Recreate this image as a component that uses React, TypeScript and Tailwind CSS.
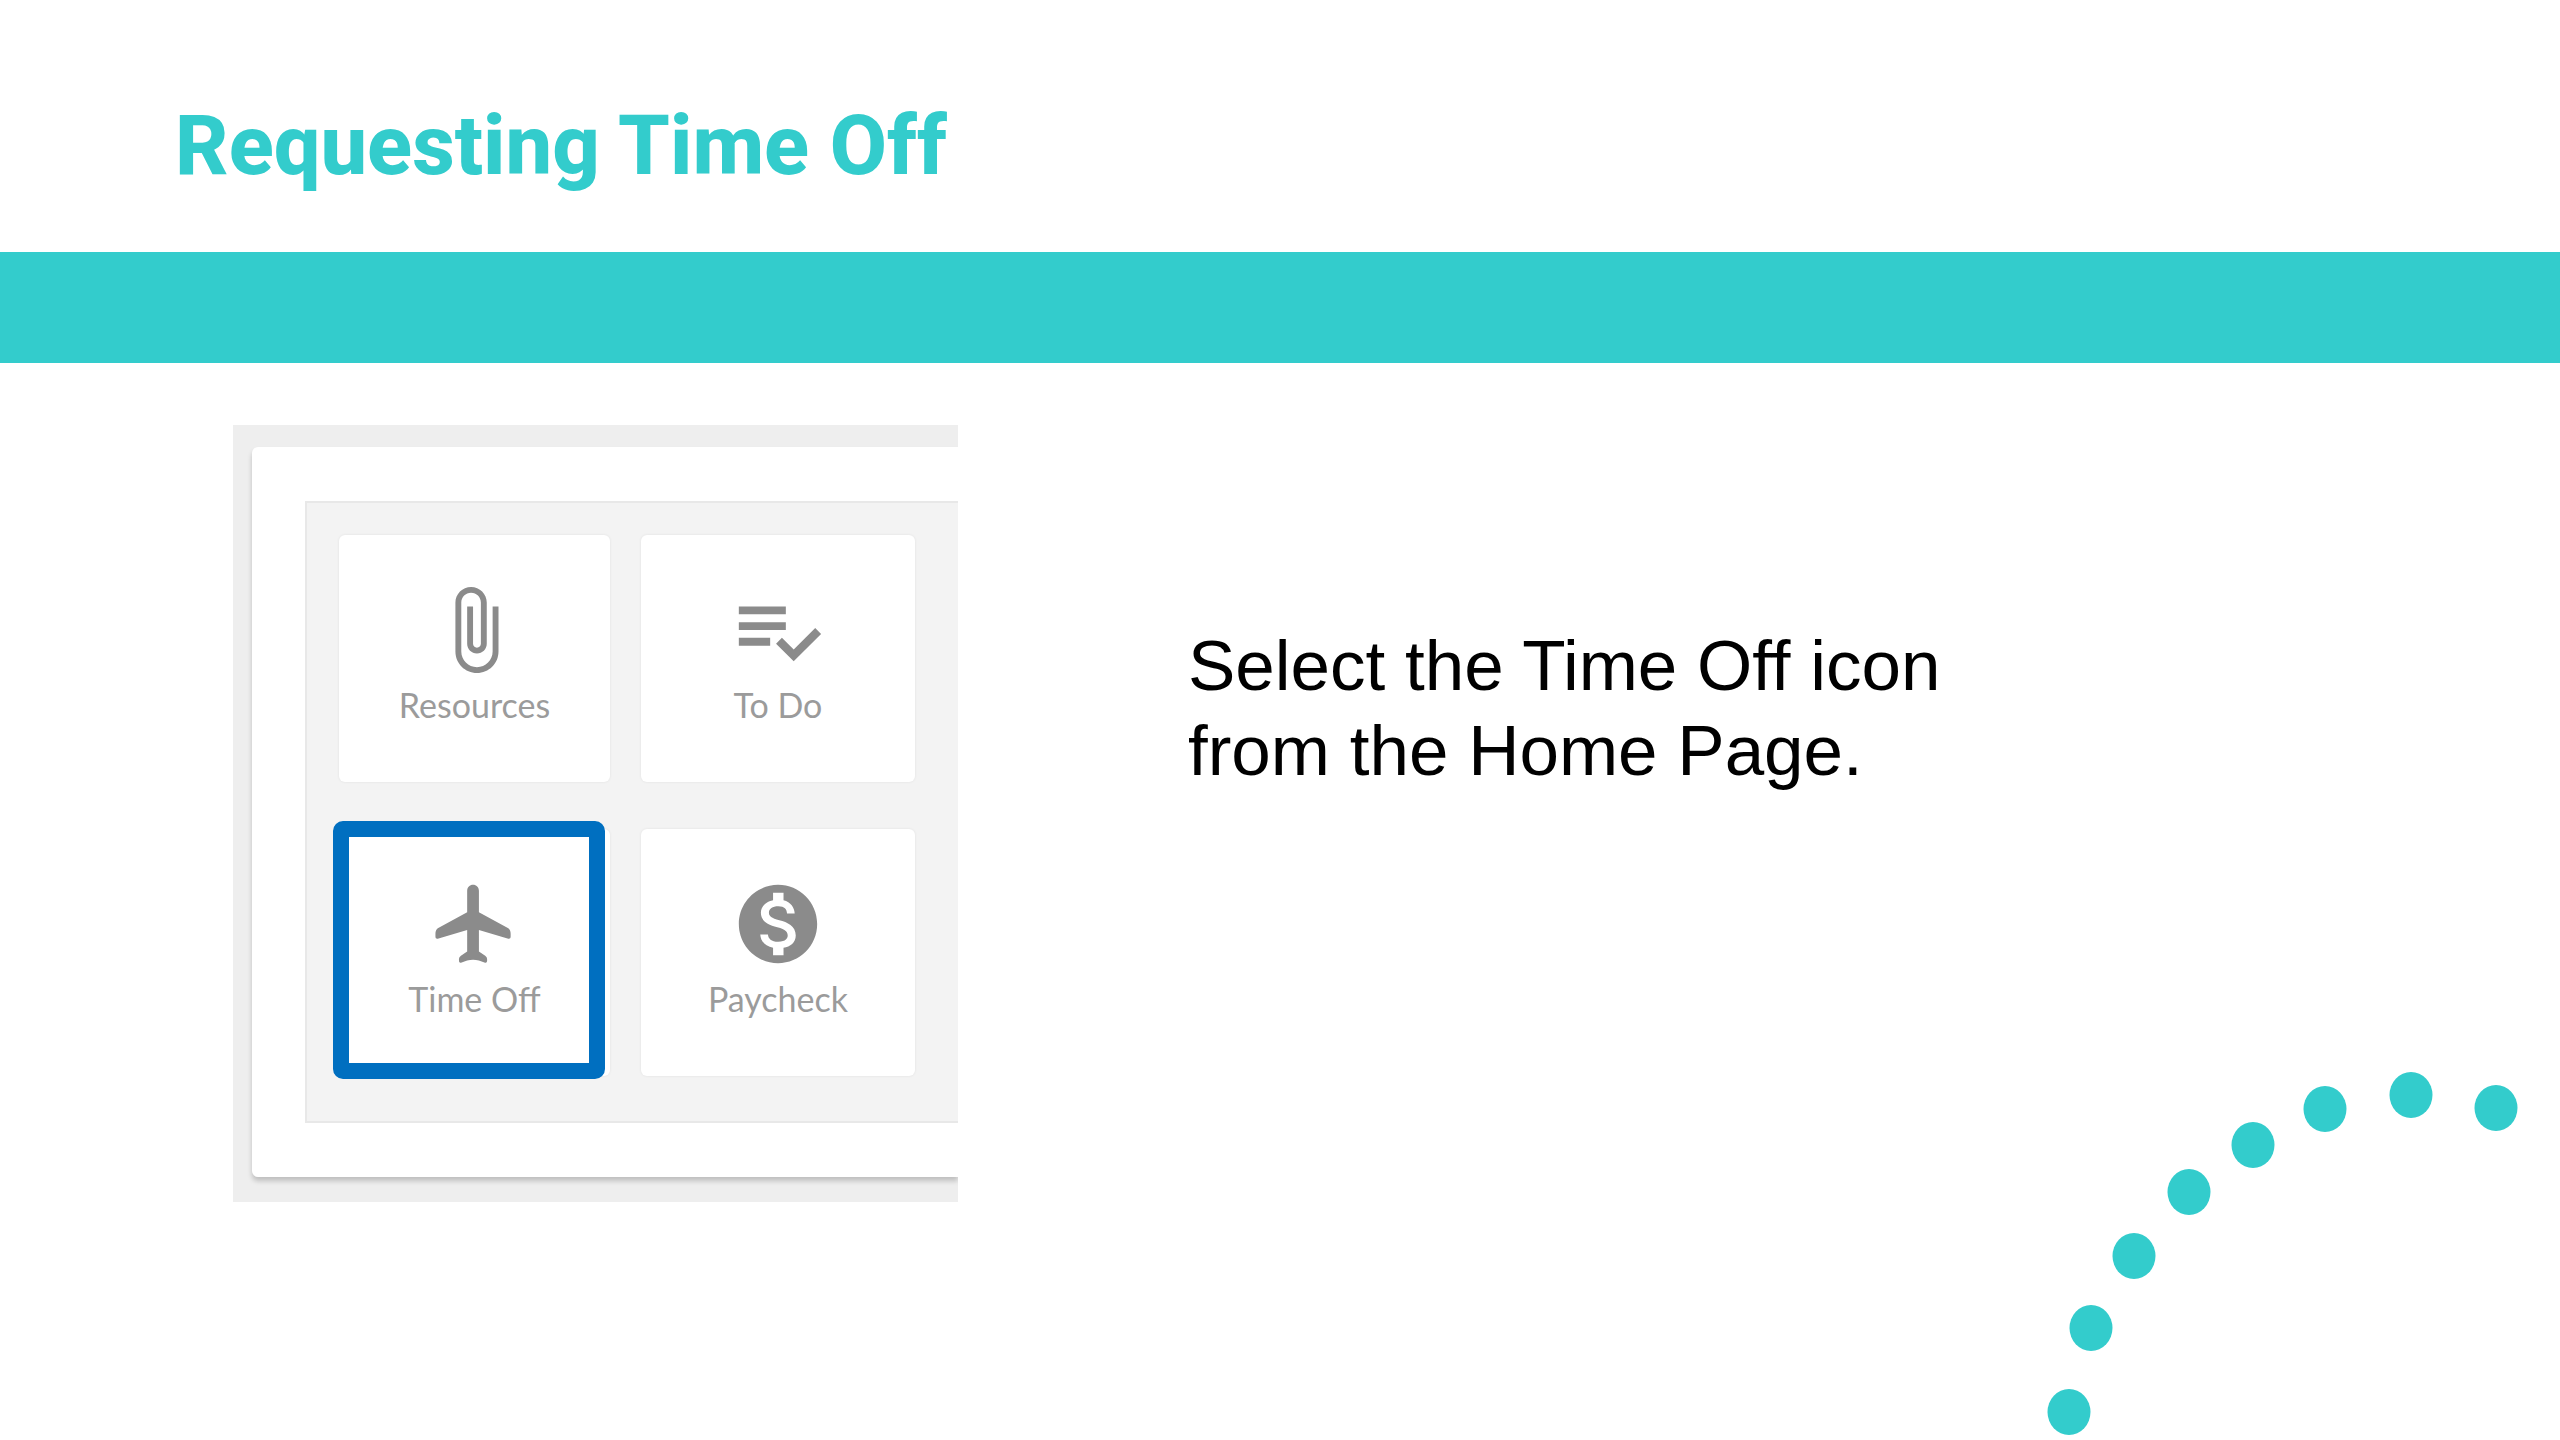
import type { ReactNode } from "react";

const dots = [
  [29, 352],
  [51, 268],
  [94, 196],
  [149, 132],
  [213, 85],
  [285, 49],
  [371, 35],
  [456, 48],
];

function Icon({ d }: { d: string }) {
  return (
    <svg viewBox="0 0 24 24" className="size-[94px]" fill="currentColor" aria-hidden="true">
      <path d={d} />
    </svg>
  );
}

function Tile({ label, icon, children }: { label: string; icon: string; children?: ReactNode }) {
  return (
    <button
      type="button"
      className="relative flex h-[247px] flex-col items-center rounded-md bg-white pt-12 text-[#8b8b8b] shadow-[0_0_3px_rgba(0,0,0,0.08)]"
    >
      <Icon d={icon} />
      <span className="text-[34px] leading-[56px] text-[#9b9b9b]">{label}</span>
      {children}
    </button>
  );
}

export default function App() {
  return (
    <div className="relative flex min-h-screen flex-col overflow-hidden bg-white">
      <header className="px-[175px] pt-24 pb-14">
        <h1 className="font-['Roboto',sans-serif] text-[83px] leading-[100px] font-extrabold text-[#33cccc]">
          Requesting Time Off
        </h1>
      </header>
      <div className="h-[111px] bg-[#33cccc]" />

      <main className="flex items-start gap-[230px] pt-[62px] pr-24 pl-[233px]">
        <section
          aria-label="Home Page"
          className="w-[725px] shrink-0 overflow-hidden bg-[#eeeeee] pt-[22px] pb-[25px] pl-[19px] font-['Lato',sans-serif]"
        >
          <div className="rounded-l-md bg-white py-[54px] pl-[53px] shadow-[0_4px_5px_rgba(0,0,0,0.2)]">
            <div className="grid grid-cols-[271px_274px] gap-x-[31px] gap-y-[47px] border-y-2 border-l-2 border-[#e8e8e8] bg-[#f3f3f3] pt-8 pb-[45px] pl-8">
              <Tile
                label="Resources"
                icon="M16.5 6v11.5c0 2.21-1.79 4-4 4s-4-1.79-4-4V5c0-1.38 1.12-2.5 2.5-2.5s2.5 1.12 2.5 2.5v10.5c0 .55-.45 1-1 1s-1-.45-1-1V6H10v9.5c0 1.38 1.12 2.5 2.5 2.5s2.5-1.12 2.5-2.5V5c0-2.21-1.79-4-4-4S7 2.79 7 5v12.5c0 3.04 2.46 5.5 5.5 5.5s5.5-2.46 5.5-5.5V6h-1.5z"
              />
              <Tile
                label="To Do"
                icon="M14 10H2v2h12v-2zm0-4H2v2h12V6zM2 16h8v-2H2v2zm19.5-4.5L23 13l-6.99 7-4.51-4.5L13 14l3.01 3 5.49-5.5z"
              />
              <Tile
                label="Time Off"
                icon="M20.5 13.1 13 9V3.5c0-.83-.67-1.5-1.5-1.5S10 2.67 10 3.5V9l-7.5 4.1c-.4.3-.6.8-.6 1.4v.7c0 .5.3.7.8.5L10 13.5V19l-1.6 1.1c-.4.3-.5.6-.5 1.1 0 .6.2.8.7.6.9-.4 1.9-.7 2.9-.7s2 .3 2.9.7c.5.2.7 0 .7-.6 0-.5-.1-.8-.5-1.1L13 19v-5.5l7.3 2.2c.5.2.8 0 .8-.5v-.7c0-.6-.2-1.1-.6-1.4z"
              >
                <span className="absolute -top-2 right-[5px] -bottom-[3px] -left-1.5 rounded-[10px] border-16 border-[#006fc0]" />
              </Tile>
              <Tile
                label="Paycheck"
                icon="M12 2C6.48 2 2 6.48 2 12s4.48 10 10 10 10-4.48 10-10S17.52 2 12 2zm1.41 16.09V20h-2.67v-1.93c-1.71-.36-3.16-1.46-3.27-3.4h1.96c.1 1.05.82 1.87 2.65 1.87 1.96 0 2.4-.98 2.4-1.59 0-.83-.44-1.61-2.67-2.14-2.48-.6-4.18-1.62-4.18-3.67 0-1.72 1.39-2.84 3.11-3.21V4h2.67v1.95c1.86.45 2.79 1.86 2.85 3.39H14.3c-.05-1.11-.64-1.87-2.22-1.87-1.5 0-2.4.68-2.4 1.64 0 .84.65 1.39 2.67 1.91s4.18 1.39 4.18 3.91c-.01 1.83-1.38 2.83-3.12 3.16z"
              />
            </div>
          </div>
        </section>

        <p className="max-w-[800px] pt-[198px] font-['Liberation_Sans',Arial,sans-serif] text-[71px] leading-[85px] text-black">
          Select the Time Off icon from the Home Page.
        </p>
      </main>

      <svg
        viewBox="0 0 520 380"
        className="absolute right-0 bottom-0 h-[380px] w-[520px] fill-[#33cccc]"
        aria-hidden="true"
      >
        {dots.map(([cx, cy]) => (
          <ellipse key={cx} cx={cx} cy={cy} rx={21.5} ry={23} />
        ))}
      </svg>
    </div>
  );
}
